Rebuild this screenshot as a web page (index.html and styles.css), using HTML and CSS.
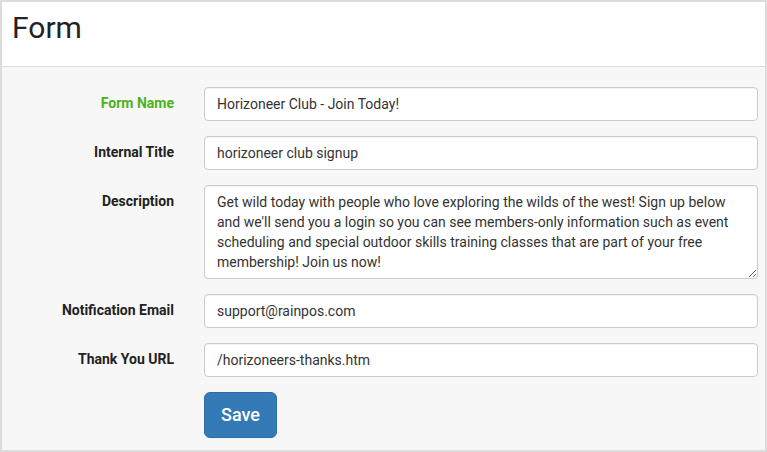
FILE: index.html
```html
<!DOCTYPE html>
<html>
<head>
<meta charset="utf-8">
<link rel="stylesheet" href="styles.css">
</head>
<body>
<div class="panel">
  <div class="panel-head">
    <h1 class="title">Form</h1>
  </div>
  <form class="panel-body">
    <div class="row">
      <label class="lbl lbl-active">Form Name</label>
      <input class="field" type="text" value="Horizoneer Club - Join Today!">
    </div>
    <div class="row">
      <label class="lbl">Internal Title</label>
      <input class="field" type="text" value="horizoneer club signup">
    </div>
    <div class="row">
      <label class="lbl">Description</label>
      <textarea class="field area" rows="4">Get wild today with people who love exploring the wilds of the west! Sign up below and we'll send you a login so you can see members-only information such as event scheduling and special outdoor skills training classes that are part of your free membership! Join us now!</textarea>
    </div>
    <div class="row">
      <label class="lbl">Notification Email</label>
      <input class="field" type="text" value="support@rainpos.com">
    </div>
    <div class="row">
      <label class="lbl">Thank You URL</label>
      <input class="field" type="text" value="/horizoneers-thanks.htm">
    </div>
    <div class="row">
      <span class="lbl"></span>
      <div><button type="button" class="btn">Save</button></div>
    </div>
  </form>
</div>
</body>
</html>
```
FILE: styles.css
```css
* { box-sizing: border-box; }
html, body { margin: 0; padding: 0; }
body {
  width: 767px;
  height: 452px;
  font-family: Roboto, "Liberation Sans", Arial, sans-serif;
  color: #333;
  background: #f7f7f7;
}
.panel {
  width: 767px;
  height: 452px;
  border: 2px solid #dcdcdc;
  background: #f7f7f7;
  display: flex;
  flex-direction: column;
}
.panel-head {
  background: #fff;
  height: 65px;
  border-bottom: 1px solid #ddd;
  padding: 7px 0 0 10px;
}
.title {
  margin: 0;
  font-size: 30px;
  font-weight: 400;
  line-height: 38px;
  color: #222;
}
.panel-body {
  padding: 20px 7px 0 0;
  display: flex;
  flex-direction: column;
  gap: 15px;
}
.row {
  display: grid;
  grid-template-columns: 172px 1fr;
  column-gap: 30px;
  align-items: start;
}
.lbl {
  text-align: right;
  font-weight: 700;
  font-size: 14px;
  line-height: 20px;
  padding-top: 6px;
  color: #222;
}
.lbl-active { color: #4cb21c; }
.field {
  display: block;
  width: 100%;
  height: 34px;
  padding: 6px 12px;
  font-family: Roboto, "Liberation Sans", Arial, sans-serif;
  font-size: 14px;
  line-height: 20px;
  color: #333;
  background: #fff;
  border: 1px solid #ccc;
  border-radius: 4px;
  box-shadow: inset 0 1px 1px rgba(0,0,0,0.05);
  outline: none;
}
.area {
  height: 94px;
  resize: vertical;
  overflow: hidden;
}
.btn {
  height: 46px;
  padding: 10px 16px;
  font-family: Roboto, "Liberation Sans", Arial, sans-serif;
  font-size: 18px;
  font-weight: 500;
  line-height: 24px;
  color: #fff;
  background: #337ab7;
  border: 1px solid #2e6da4;
  border-radius: 6px;
}
```
